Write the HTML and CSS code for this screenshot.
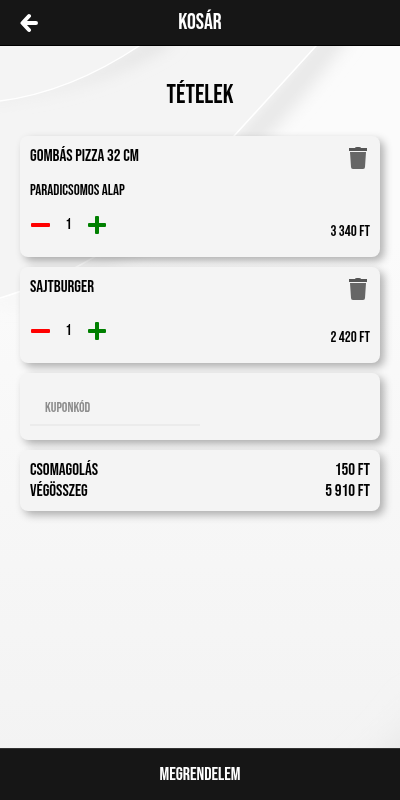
FILE: index.html
```html
<!DOCTYPE html>
<html lang="hu">
<head>
    <meta charset="UTF-8">
    <meta name="viewport" content="width=device-width, initial-scale=1.0">
    <title>Kosár</title>
    <link rel="stylesheet" href="styles.css">
</head>
<body>

    <!-- Background waves -->
    <svg class="background" viewBox="0 0 400 800" preserveAspectRatio="xMidYMid slice" aria-hidden="true">
        <defs>
            <linearGradient id="base" x1="0" y1="0" x2="0" y2="1">
                <stop offset="0.3" stop-color="#fbfbfb"/>
                <stop offset="0.95" stop-color="#f3f3f3"/>
            </linearGradient>
            <linearGradient id="shade" x1="0" y1="0" x2="1" y2="0">
                <stop offset="0.1" stop-color="#e8e8e8" stop-opacity="0.2"/>
                <stop offset="0.7" stop-color="#e8e8e8"/>
            </linearGradient>
            <filter id="soft" x="-20%" y="-20%" width="140%" height="140%">
                <feGaussianBlur stdDeviation="8"/>
            </filter>
            <filter id="softer" x="-50%" y="-50%" width="200%" height="200%">
                <feGaussianBlur stdDeviation="18"/>
            </filter>
        </defs>
        <rect width="400" height="800" fill="url(#base)"/>
        <path d="M330 20 Q150 262 -10 300 L10 308 Q190 262 362 20 Z" fill="url(#shade)" filter="url(#soft)"/>
        <path d="M0 0 H350 L316 46 L234 136 Q130 260 0 298 Z" fill="#f4f4f4"/>
        <path d="M355 3 L316 46 L234 136 Q130 260 0 298" fill="none" stroke="#fff" stroke-width="1.5"/>
        <path d="M160 34 Q80 92 -10 96 L-10 100 Q100 90 175 40 Z" fill="#e0e0e0" filter="url(#soft)"/>
        <path d="M0 0 H190 Q150 38 139 46 Q70 92 0 101 Z" fill="#f4f4f4"/>
        <path d="M150 38 L139 46 Q70 92 0 101" fill="none" stroke="#fff" stroke-width="1.5"/>
        <path d="M430 700 V830 H280 Q370 790 430 700 Z" fill="#e6e6e6" filter="url(#softer)"/>
    </svg>

    <header>
        <a href="#" class="back" aria-label="Vissza">
            <svg viewBox="0 0 18 20">
                <path d="M9 3 L2.500 10 L9 17 M3 10 H16" fill="none" stroke="#fff" stroke-width="4" stroke-linecap="round" stroke-linejoin="round"/>
            </svg>
        </a>
        <h1>KOSÁR</h1>
    </header>

    <main>
        <h2>TÉTELEK</h2>

        <section class="card item">
            <div class="row">
                <h3>GOMBÁS PIZZA 32 CM</h3>
                <button type="button" class="icon trash" aria-label="Törlés">
                    <svg viewBox="0 0 20 22">
                        <path d="M1 1 H7 Q7 0 9 0 H11 Q13 0 13 1 H19 V4 H1 Z" fill="#555"/>
                        <path d="M2 5 H18 L17 20 Q17 22 15 22 H5 Q3 22 3 20 Z" fill="#666"/>
                    </svg>
                </button>
            </div>
            <p class="extra">PARADICSOMOS ALAP</p>
            <div class="row">
                <div class="quantity">
                    <button type="button" class="icon" aria-label="Kevesebb">
                        <svg viewBox="0 0 20 20"><rect x="1" y="8" width="19" height="4" rx="1" fill="#f00"/></svg>
                    </button>
                    <span>1</span>
                    <button type="button" class="icon" aria-label="Több">
                        <svg viewBox="0 0 20 20"><path d="M2 8 H8 V2 Q8 1 9 1 H11 Q12 1 12 2 V8 H18 Q19 8 19 9 V11 Q19 12 18 12 H12 V18 Q12 19 11 19 H9 Q8 19 8 18 V12 H2 Q1 12 1 11 V9 Q1 8 2 8 Z" fill="#008000"/></svg>
                    </button>
                </div>
                <p class="price">3 340 FT</p>
            </div>
        </section>

        <section class="card item">
            <div class="row">
                <h3>SAJTBURGER</h3>
                <button type="button" class="icon trash" aria-label="Törlés">
                    <svg viewBox="0 0 20 22">
                        <path d="M1 1 H7 Q7 0 9 0 H11 Q13 0 13 1 H19 V4 H1 Z" fill="#555"/>
                        <path d="M2 5 H18 L17 20 Q17 22 15 22 H5 Q3 22 3 20 Z" fill="#666"/>
                    </svg>
                </button>
            </div>
            <div class="row">
                <div class="quantity">
                    <button type="button" class="icon" aria-label="Kevesebb">
                        <svg viewBox="0 0 20 20"><rect x="1" y="8" width="19" height="4" rx="1" fill="#f00"/></svg>
                    </button>
                    <span>1</span>
                    <button type="button" class="icon" aria-label="Több">
                        <svg viewBox="0 0 20 20"><path d="M2 8 H8 V2 Q8 1 9 1 H11 Q12 1 12 2 V8 H18 Q19 8 19 9 V11 Q19 12 18 12 H12 V18 Q12 19 11 19 H9 Q8 19 8 18 V12 H2 Q1 12 1 11 V9 Q1 8 2 8 Z" fill="#008000"/></svg>
                    </button>
                </div>
                <p class="price">2 420 FT</p>
            </div>
        </section>

        <section class="card coupon">
            <input type="text" placeholder="KUPONKÓD" aria-label="Kuponkód">
        </section>

        <section class="card totals">
            <div class="row">
                <p>CSOMAGOLÁS</p>
                <p>150 FT</p>
            </div>
            <div class="row">
                <p>VÉGÖSSZEG</p>
                <p>5 910 FT</p>
            </div>
        </section>
    </main>

    <footer>
        <button type="button" class="order">MEGRENDELEM</button>
    </footer>

</body>
</html>
```
FILE: styles.css
```css
* {
    margin: 0;
    padding: 0;
    box-sizing: border-box;
    font-family: "Bebas Neue", "Liberation Sans Narrow", "Liberation Sans", sans-serif;
}

body {
    display: flex;
    flex-direction: column;
    min-height: 100vh;
    background: #f6f6f6;
    color: #000;
}

.background {
    position: fixed;
    top: 0;
    left: 0;
    width: 100%;
    height: 100%;
    z-index: -1;
}

h1, h2, h3 {
    font-weight: normal;
}

header {
    display: grid;
    grid-template-columns: 20px 1fr 20px;
    align-items: center;
    height: 46px;
    padding: 0 20px;
    background: #161616;
    border-bottom: 1px solid #000;
    color: #fff;
}

header h1 {
    font-size: 22px;
    line-height: 24px;
    text-align: center;
}

.back svg {
    display: block;
    width: 18px;
    height: 20px;
}

main {
    flex: 1;
    display: flex;
    flex-direction: column;
    gap: 10px;
    padding: 30px 20px;
}

main h2 {
    margin-bottom: 10px;
    font-size: 26px;
    line-height: 40px;
    text-align: center;
}

.card {
    padding: 10px;
    border-radius: 8px;
    background: #f4f4f4;
    box-shadow: 4px 4px 8px rgba(0, 0, 0, 0.3);
}

.row {
    display: flex;
    justify-content: space-between;
}

.item {
    padding-bottom: 15px;
}

.item h3 {
    font-size: 17px;
    line-height: 20px;
}

.extra {
    margin: 14px 0 -4px;
    font-size: 15px;
    line-height: 15px;
}

.icon {
    width: 20px;
    height: 20px;
    border: none;
    background: none;
    cursor: pointer;
}

.icon svg {
    display: block;
    width: 100%;
    height: 100%;
}

.trash {
    height: 22px;
    margin: 1px 2px 0 0;
}

.quantity {
    display: flex;
    align-items: center;
    height: 48px;
    padding-top: 14px;
    font-size: 15px;
}

.quantity span {
    width: 37px;
    padding-bottom: 2px;
    text-align: center;
}

.price {
    align-self: flex-end;
    font-size: 15px;
    line-height: 20px;
}

.coupon {
    padding-bottom: 14px;
}

.coupon input {
    display: block;
    width: 50%;
    min-width: 170px;
    height: 43px;
    padding: 8px 15px 0;
    border: none;
    border-bottom: 2px solid #ebebeb;
    background: none;
    font-size: 14px;
    outline: none;
}

.coupon input::placeholder {
    color: #8c8c8c;
}

.totals {
    padding-bottom: 9px;
    font-size: 17px;
    line-height: 21px;
}

footer {
    background: #161616;
    border-top: 1px solid #333;
}

.order {
    display: block;
    width: 100%;
    height: 51px;
    border: none;
    background: none;
    color: #fff;
    font-size: 18px;
    cursor: pointer;
}
```
